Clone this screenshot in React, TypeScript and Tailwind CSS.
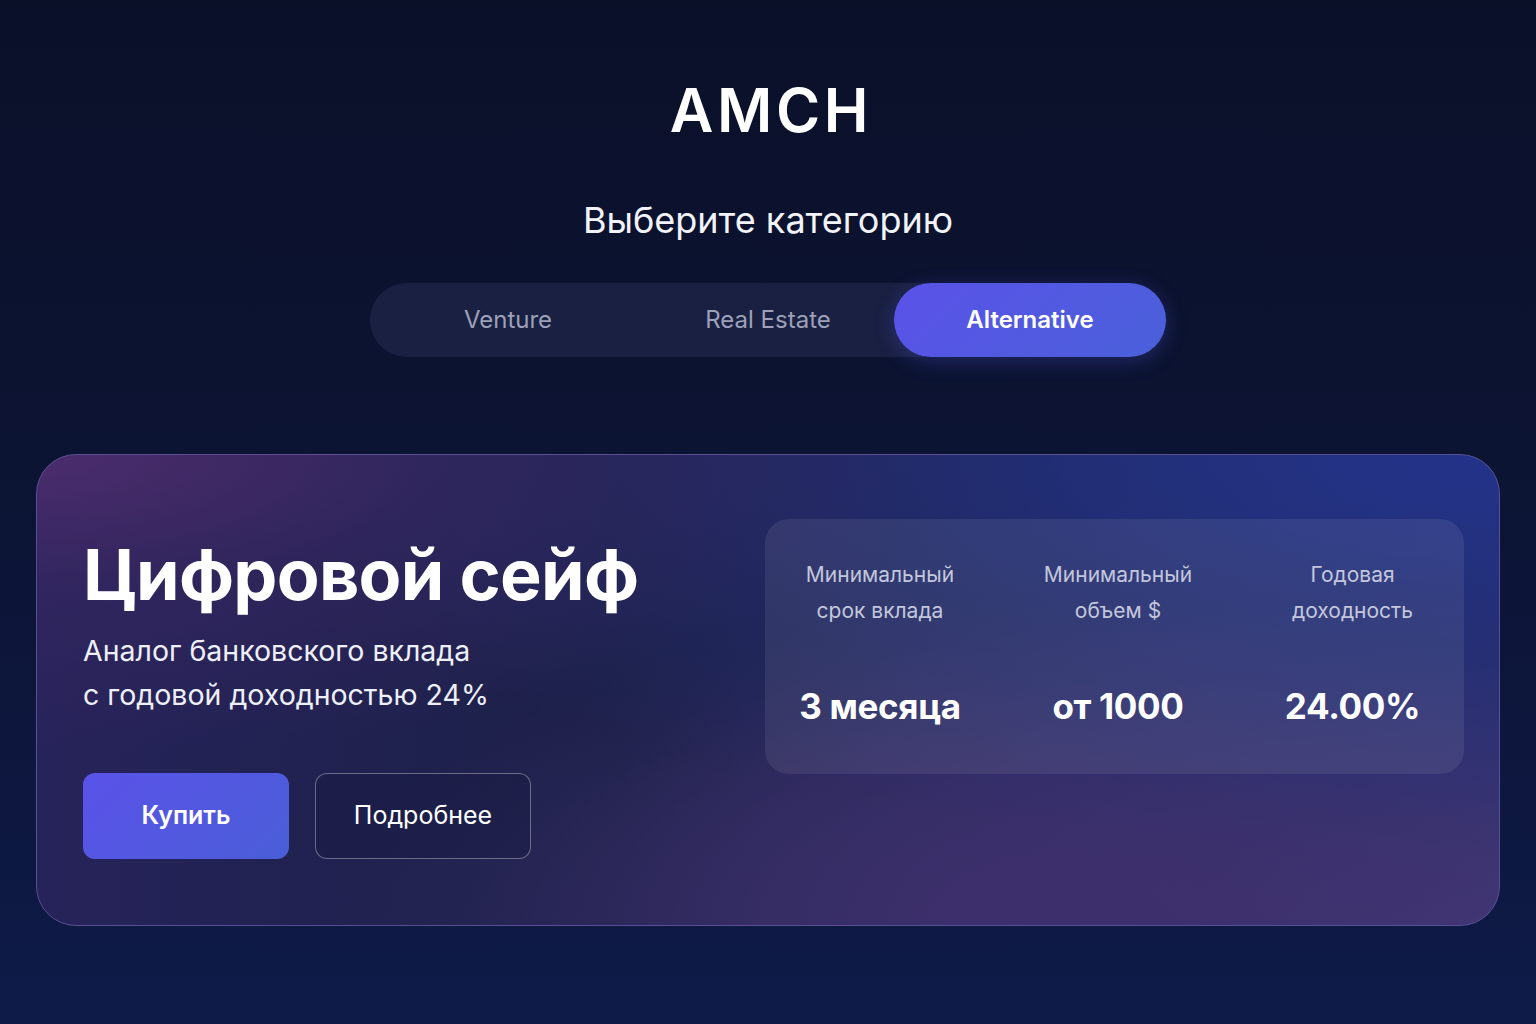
import React from "react";

export default function App() {
  const stats = [
    { label: ["Минимальный", "срок вклада"], value: "3 месяца" },
    { label: ["Минимальный", "объем $"], value: "от 1000" },
    { label: ["Годовая", "доходность"], value: "24.00%" },
  ];
  return (
    <div
      className="w-[1536px] h-[1024px] overflow-hidden flex flex-col items-center text-white bg-[linear-gradient(180deg,#0b1029_0%,#0c1433_45%,#0e1a48_100%)]"
      style={{ fontFamily: "Inter, 'Noto Sans', sans-serif" }}
    >
      <h1 className="mt-[80px] text-[60px] leading-[60px] font-semibold tracking-[0.06em] pl-[6px]">
        AMCH
      </h1>
      <h2 className="mt-[58px] text-[36px] leading-[44px] font-normal text-[#f2f3f8]">
        Выберите категорию
      </h2>
      <div className="mt-[41px] w-[796px] h-[74px] rounded-full bg-[#1a2042] grid grid-cols-[262px_262px_272px] text-[24px]">
        <div className="flex items-center justify-center text-[#9ca1b9] pl-[14px]">Venture</div>
        <div className="flex items-center justify-center text-[#9ca1b9] pl-[10px]">Real Estate</div>
        <div className="flex items-center justify-center rounded-full font-semibold text-white bg-[linear-gradient(135deg,#5a52e8_0%,#4a60da_100%)] shadow-[0_4px_20px_rgba(80,90,230,0.3)]">
          Alternative
        </div>
      </div>

      <div className="mt-[97px] w-[1464px] h-[472px] rounded-[40px] border border-[#5a4f92] bg-[radial-gradient(ellipse_at_0%_0%,#4b2c6c_0%,rgba(60,40,100,0.5)_20%,transparent_45%),radial-gradient(ellipse_at_100%_0%,#23338a_0%,rgba(35,50,130,0.5)_30%,transparent_60%),radial-gradient(ellipse_at_70%_100%,#3e2f6c_0%,transparent_50%),radial-gradient(ellipse_at_100%_100%,#433a78_0%,transparent_50%),linear-gradient(90deg,#26235a_0%,#1b2047_40%,#242a62_100%)] flex px-[46px] pt-[64px]">
        <div className="flex-1 flex flex-col">
          <div className="mt-[16px] text-[70px] leading-[80px] font-bold tracking-[-0.01em]">
            Цифровой сейф
          </div>
          <div className="mt-[14px] text-[28.5px] leading-[44px] text-[#eef0f7]">
            <div>Аналог банковского вклада</div>
            <div>с годовой доходностью 24%</div>
          </div>
          <div className="mt-[56px] flex gap-[26px]">
            <button className="w-[206px] h-[86px] rounded-[12px] text-[25px] font-semibold bg-[linear-gradient(135deg,#5a52e8_0%,#4a5ed8_100%)]">
              Купить
            </button>
            <button className="w-[216px] h-[86px] rounded-[12px] text-[25px] border border-[rgba(255,255,255,0.35)] bg-[rgba(20,24,60,0.3)]">
              Подробнее
            </button>
          </div>
        </div>
        <div className="w-[699px] h-[255px] -mr-[11px] rounded-[24px] bg-[rgba(255,255,255,0.08)] grid grid-cols-[230px_246px_223px] pt-[38px]">
          {stats.map((s, i) => (
            <div key={i} className="flex flex-col items-center">
              <div className="text-[21px] leading-[36px] text-[#c3c7dc] text-center">
                {s.label.map((l, j) => (
                  <div key={j}>{l}</div>
                ))}
              </div>
              <div className="mt-[57px] text-[35px] leading-[40px] font-bold tracking-[-0.01em]">{s.value}</div>
            </div>
          ))}
        </div>
      </div>
    </div>
  );
}
